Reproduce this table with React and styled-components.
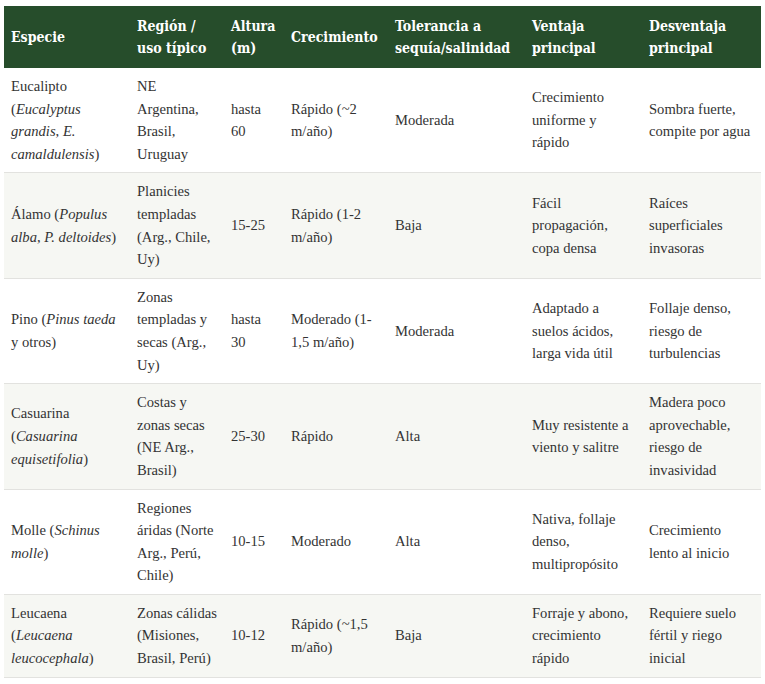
import React from "react";
import styled, { createGlobalStyle } from "styled-components";

const GlobalStyle = createGlobalStyle`
	html, body {
		margin: 0;
		padding: 0;
		background: #fff;
	}
`;

const Page = styled.main`
	padding: 6px 4px;
	width: 757px;
`;

const Table = styled.table`
	width: 757px;
	border-collapse: collapse;
	table-layout: fixed;
	font-family: "Liberation Serif", Georgia, serif;
	font-size: 14.6px;
	color: #333;
`;

const HeadCell = styled.th`
	background: #264d2b;
	color: #fff;
	text-align: left;
	vertical-align: middle;
	font-family: "DejaVu Serif Condensed", "DejaVu Serif", serif;
	font-weight: bold;
	font-size: 14px;
	line-height: 22px;
	padding: 9px 7px;
`;

const Row = styled.tr`
	background: ${(p) => (p.$shade ? "#f6f7f3" : "#fff")};
`;

const Cell = styled.td`
	vertical-align: middle;
	line-height: 22.6px;
	padding: 7px;
	border-bottom: 1px solid #e2e2df;

	&:last-child {
		padding-right: 10px;
	}
`;

const columns = [
	{ label: "Especie", width: 126 },
	{ label: ["Región /", "uso típico"], width: 94 },
	{ label: ["Altura", "(m)"], width: 60 },
	{ label: "Crecimiento", width: 104 },
	{ label: ["Tolerancia a", "sequía/salinidad"], width: 137 },
	{ label: ["Ventaja", "principal"], width: 117 },
	{ label: ["Desventaja", "principal"], width: 119 },
];

const rows = [
	[
		<>Eucalipto (<i>Eucalyptus grandis</i>, <i>E. camaldulensis</i>)</>,
		"NE Argentina, Brasil, Uruguay",
		"hasta 60",
		"Rápido (~2 m/año)",
		"Moderada",
		"Crecimiento uniforme y rápido",
		"Sombra fuerte, compite por agua",
	],
	[
		<>Álamo (<i>Populus alba</i>, <i>P. deltoides</i>)</>,
		"Planicies templadas (Arg., Chile, Uy)",
		"15-25",
		"Rápido (1-2 m/año)",
		"Baja",
		"Fácil propagación, copa densa",
		"Raíces superficiales invasoras",
	],
	[
		<>Pino (<i>Pinus taeda</i> y otros)</>,
		"Zonas templadas y secas (Arg., Uy)",
		"hasta 30",
		"Moderado (1-1,5 m/año)",
		"Moderada",
		"Adaptado a suelos ácidos, larga vida útil",
		"Follaje denso, riesgo de turbulencias",
	],
	[
		<>Casuarina (<i>Casuarina equisetifolia</i>)</>,
		"Costas y zonas secas (NE Arg., Brasil)",
		"25-30",
		"Rápido",
		"Alta",
		"Muy resistente a viento y salitre",
		"Madera poco aprovechable, riesgo de invasividad",
	],
	[
		<>Molle (<i>Schinus molle</i>)</>,
		"Regiones áridas (Norte Arg., Perú, Chile)",
		"10-15",
		"Moderado",
		"Alta",
		"Nativa, follaje denso, multipropósito",
		"Crecimiento lento al inicio",
	],
	[
		<>Leucaena (<i>Leucaena leucocephala</i>)</>,
		"Zonas cálidas (Misiones, Brasil, Perú)",
		"10-12",
		"Rápido (~1,5 m/año)",
		"Baja",
		"Forraje y abono, crecimiento rápido",
		"Requiere suelo fértil y riego inicial",
	],
];

const App = () => {
	return (
		<Page>
			<GlobalStyle />
			<Table>
				<colgroup>
					{columns.map((c, i) => (
						<col key={i} style={{ width: c.width }} />
					))}
				</colgroup>
				<thead>
					<tr>
						{columns.map((c, i) => (
							<HeadCell key={i}>
								{Array.isArray(c.label) ? (
									<>
										{c.label[0]}
										<br />
										{c.label[1]}
									</>
								) : (
									c.label
								)}
							</HeadCell>
						))}
					</tr>
				</thead>
				<tbody>
					{rows.map((r, i) => (
						<Row key={i} $shade={i % 2 === 1}>
							{r.map((v, j) => (
								<Cell key={j}>{v}</Cell>
							))}
						</Row>
					))}
				</tbody>
			</Table>
		</Page>
	);
};

export default App;
